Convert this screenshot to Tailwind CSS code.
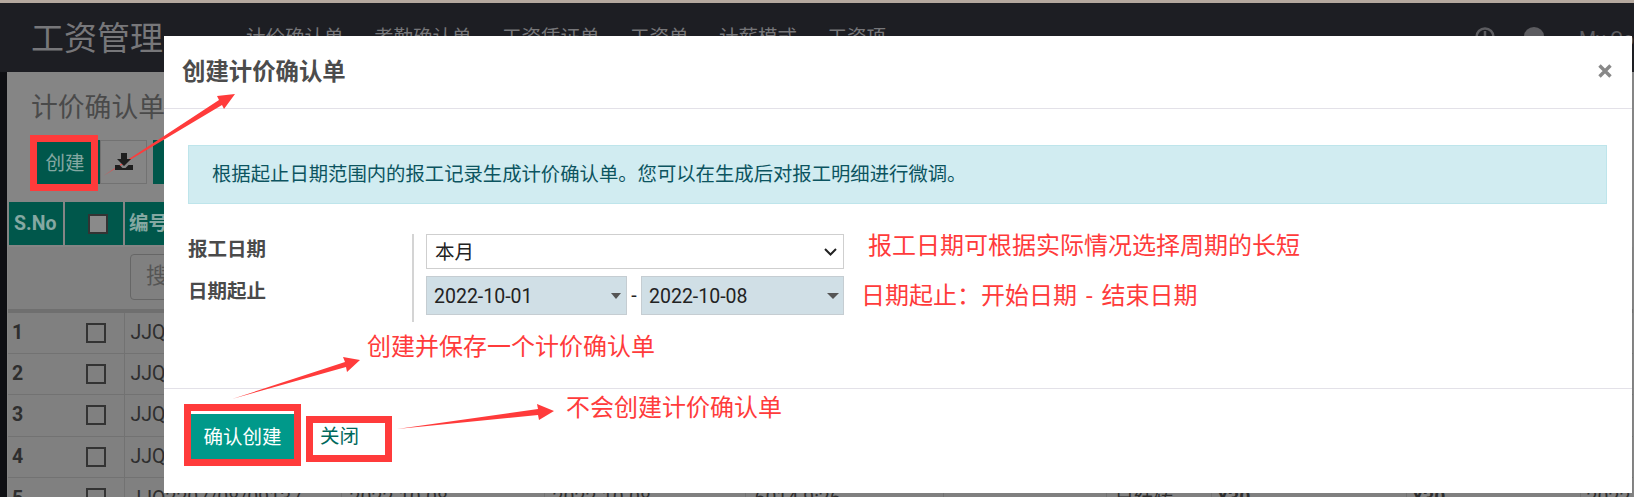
<!DOCTYPE html>
<html lang="zh-CN">
<head>
  <meta charset="UTF-8">
  <title>创建计价确认单</title>
  <script src="https://cdn.jsdelivr.net/npm/@tailwindcss/browser@4"></script>
</head>
<body class="bg-[#808080]">
<div class="relative w-[1634px] h-[497px] overflow-hidden flex flex-col font-['Roboto','Noto_Sans_CJK_SC',sans-serif] text-[19.5px] text-[#2e2e2e]">

  <!-- page behind the dialog -->
  <div class="h-[3px] bg-[#b5a99f] shrink-0"></div>
  <header class="h-[69px] shrink-0 bg-[#1d1e23] flex text-[#77777a]">
    <div class="ml-[31px] w-[215px] pt-[13px] text-[33px] leading-[46px]">工资管理</div>
    <nav class="flex gap-[30.5px] pt-[22px] leading-[26px]">
      <span>计价确认单</span><span>考勤确认单</span><span>工资凭证单</span><span>工资单</span><span>计薪模式</span><span>工资项</span>
    </nav>
    <div class="ml-auto flex items-start pt-[24px] text-[#5c5c60]">
      <svg class="w-[20px] h-[20px] mr-[29px]" viewBox="0 0 20 20" fill="none" stroke="currentColor" stroke-width="2.5"><circle cx="10" cy="10" r="8.5"/><path d="M10 4v7"/></svg>
      <svg class="w-[23px] h-[20px] mr-[32px]" viewBox="0 0 23 20" fill="currentColor"><ellipse cx="10" cy="9" rx="10" ry="9"/></svg>
      <span class="w-[55px] whitespace-nowrap overflow-hidden leading-[26px]">My Company</span>
    </div>
  </header>

  <main class="flex-1 flex min-h-0">
    <div class="w-[7px] bg-[#0e0f13] shrink-0"></div>
    <div class="flex-1 min-w-0 bg-[#858585]">
      <h1 class="ml-[24px] mt-[18px] text-[26.8px] leading-[36px] text-[#4a4a4a]">计价确认单</h1>
      <div class="ml-[30px] mt-[14px] flex h-[44px]">
        <button class="w-[55px] pt-[3px] pl-[2px] bg-[#00574b] text-[#85a8a2] border-r border-[#858585]">创建</button>
        <span class="w-[8px] bg-[#00574b]"></span>
        <button class="w-[47px] border border-[#727272] flex items-center justify-center">
          <svg class="relative z-10 w-[18px] h-[17px] -mt-[2px]" viewBox="0 0 18 17" fill="#1e1e1e"><path d="M6 0h6v6h4l-7 7-7-7h4z"/><path d="M0 12h4.5l3 3h3l3-3H18v5H0z"/></svg>
        </button>
        <span class="w-[60px] ml-[6px] bg-[#00574b]"></span>
      </div>
      <table class="mt-[16px] w-[1627px] table-fixed border-collapse">
        <colgroup>
          <col class="w-[56px]"><col class="w-[60px]"><col class="w-[217px]"><col class="w-[203px]"><col class="w-[201px]"><col class="w-[198px]"><col class="w-[163px]"><col class="w-[105px]"><col class="w-[195px]"><col class="w-[174px]"><col>
        </colgroup>
        <thead>
          <tr class="h-[45px] bg-[#00574b] text-[#85a8a2] font-bold text-left">
            <th class="border-2 border-[#858585] pl-[5px]">S.No</th>
            <th class="border-2 border-[#858585]"><span class="block ml-[23px] w-[20px] h-[20px] bg-[#8a8a8a] border-2 border-[#333]"></span></th>
            <th class="border-2 border-[#858585] pl-[4px]">编号</th>
            <th class="border-2 border-[#858585]"></th><th class="border-2 border-[#858585]"></th><th class="border-2 border-[#858585]"></th><th class="border-2 border-[#858585]"></th><th class="border-2 border-[#858585]"></th><th class="border-2 border-[#858585]"></th><th class="border-2 border-[#858585]"></th><th class="border-2 border-[#858585]"></th>
          </tr>
        </thead>
        <tbody class="bg-[#808080]">
          <tr class="h-[65px] border-b-4 border-[#6f6f6f]">
            <td colspan="2"></td>
            <td class="pl-[6px]"><div class="w-[120px] h-[46px] -mt-[3px] border border-[#666] rounded-[4px] pl-[15px] text-[22px] leading-[42px] text-[#555]">搜索</div></td>
            <td colspan="8"></td>
          </tr>
          <tr class="h-[42px] border-b border-[#727272]">
            <td class="pl-[4px] font-bold">1</td>
            <td class="border-r border-[#727272]"><span class="block ml-[22px] w-[20px] h-[20px] border-2 border-[#333]"></span></td>
            <td class="pl-[6px]">JJQ</td><td colspan="8"></td>
          </tr>
          <tr class="h-[41px] border-b border-[#727272]">
            <td class="pl-[4px] font-bold">2</td>
            <td class="border-r border-[#727272]"><span class="block ml-[22px] w-[20px] h-[20px] border-2 border-[#333]"></span></td>
            <td class="pl-[6px]">JJQ</td><td colspan="8"></td>
          </tr>
          <tr class="h-[42px] border-b border-[#727272]">
            <td class="pl-[4px] font-bold">3</td>
            <td class="border-r border-[#727272]"><span class="block ml-[22px] w-[20px] h-[20px] border-2 border-[#333]"></span></td>
            <td class="pl-[6px]">JJQ</td><td colspan="8"></td>
          </tr>
          <tr class="h-[41px] border-b border-[#727272]">
            <td class="pl-[4px] font-bold">4</td>
            <td class="border-r border-[#727272]"><span class="block ml-[22px] w-[20px] h-[20px] border-2 border-[#333]"></span></td>
            <td class="pl-[6px]">JJQ</td><td colspan="8"></td>
          </tr>
          <tr class="h-[42px] whitespace-nowrap">
            <td class="pl-[4px] font-bold">5</td>
            <td class="border-r border-[#727272]"><span class="block ml-[22px] w-[20px] h-[20px] border-2 border-[#333]"></span></td>
            <td class="pl-[6px] border-r border-[#727272]">JJQ2207/08/09137</td>
            <td class="pl-[8px] border-r border-[#727272]">2022-10-08</td>
            <td class="pl-[8px] border-r border-[#727272]">2022-10-08</td>
            <td class="pl-[9px] border-r border-[#727272]">6014 9:26</td>
            <td class="border-r border-[#727272]"></td>
            <td class="pl-[8px] border-r border-[#727272]">日结转</td>
            <td class="pl-[6px] border-r border-[#727272] font-bold">¥30</td>
            <td class="pl-[6px] border-r border-[#727272] font-bold">¥30</td>
            <td class="pl-[6px]">2022</td>
          </tr>
        </tbody>
      </table>
    </div>
  </main>

  <!-- dialog -->
  <section class="absolute left-[164px] top-[36px] w-[1468px] h-[457px] bg-white flex flex-col">
    <div class="h-[73px] shrink-0 border-b border-[#e3e1e8] flex items-center justify-between pl-[18px] pr-[20px]">
      <h2 class="mt-[1px] text-[23.4px] font-bold text-[#4c4c4c]">创建计价确认单</h2>
      <svg class="w-[14px] h-[14px] -mt-[3px]" viewBox="0 0 14 14" fill="none" stroke="#888" stroke-width="3.4"><path d="M1.5 1.5l11 11M12.5 1.5l-11 11"/></svg>
    </div>
    <div class="h-[279px] shrink-0 pl-[24px] pr-[25px] pt-[36px]">
      <div class="h-[59px] bg-[#d1ecf1] border border-[#bee5eb] pl-[23px] flex items-center text-[#0c5460] text-[19.35px]">根据起止日期范围内的报工记录生成计价确认单。您可以在生成后对报工明细进行微调。</div>
      <div class="mt-[30px] flex h-[88px]">
        <div class="w-[226px] shrink-0 border-r-2 border-[#d4d4d4] font-bold text-[#4a4a4a] text-[19.5px]">
          <div class="mt-[3px] leading-[26px]">报工日期</div>
          <div class="mt-[16px] leading-[26px]">日期起止</div>
        </div>
        <div class="ml-[12px] w-[418px] text-[19.5px] text-[#222]">
          <div class="h-[35px] border border-[#cfcfcf] flex items-center justify-between pl-[8px] pr-[6px]">
            <span class="mt-[2px]">本月</span>
            <svg class="w-[13px] h-[8px]" viewBox="0 0 13 8" fill="none" stroke="#222" stroke-width="2"><path d="M1 1l5.5 5.5L12 1"/></svg>
          </div>
          <div class="mt-[7px] flex items-center">
            <div class="w-[201px] h-[39px] bg-[#d0dfe6] border border-[#c5cdd2] flex items-center justify-between pl-[7px] pr-[5px]">
              <span class="mt-[2px]">2022-10-01</span><span class="w-0 h-0 border-x-[5px] border-x-transparent border-t-[6px] border-t-[#555]"></span>
            </div>
            <span class="w-[14px] text-center">-</span>
            <div class="w-[203px] h-[39px] bg-[#d0dfe6] border border-[#c5cdd2] flex items-center justify-between pl-[7px] pr-[4px]">
              <span class="mt-[2px]">2022-10-08</span><span class="w-0 h-0 border-x-[6px] border-x-transparent border-t-[6px] border-t-[#555]"></span>
            </div>
          </div>
        </div>
      </div>
    </div>
    <div class="flex-1 border-t border-[#e3e1e8] pl-[27px] pt-[25px] flex items-start">
      <button class="w-[103px] h-[45px] pt-[2px] bg-[#00998a] text-white">确认创建</button>
      <button class="ml-[26px] h-[45px] w-[60px] text-left text-[#00695c]">关闭</button>
    </div>
  </section>

  <!-- red annotations drawn over the screenshot -->
  <div class="absolute left-[30px] top-[135px] w-[68px] h-[56px] border-[7px] border-[#ff3b3b]"></div>
  <div class="absolute left-[184px] top-[404px] w-[117px] h-[62px] border-[7px] border-[#ff3b3b]"></div>
  <div class="absolute left-[306px] top-[416px] w-[86px] h-[46px] border-[7px] border-[#ff3b3b]"></div>

  <p class="absolute left-[868px] top-[229px] text-[24px] leading-[34px] text-[#ff3b3b] whitespace-pre">报工日期可根据实际情况选择周期的长短</p>
  <p class="absolute left-[861px] top-[279px] text-[24px] leading-[34px] text-[#ff3b3b] whitespace-pre">日期起止&#xFF1A;开始日期<span class="px-[3px]"> - </span>结束日期</p>
  <p class="absolute left-[367px] top-[330px] text-[24px] leading-[34px] text-[#ff3b3b] whitespace-pre">创建并保存一个计价确认单</p>
  <p class="absolute left-[566px] top-[391px] text-[24px] leading-[34px] text-[#ff3b3b] whitespace-pre">不会创建计价确认单</p>

  <svg class="absolute left-0 top-0 w-[1634px] h-[497px] pointer-events-none" viewBox="0 0 1634 497" fill="#ff3b3b">
    <polygon points="103,176 219,100 217,96 235,94 224,109 222,105"/>
    <polygon points="232,399 345,362 343,357 360,360 347,372 346,367"/>
    <polygon points="397,429 538,409 537,404 554,411 539,420 538,415"/>
  </svg>
</div>
</body>
</html>
